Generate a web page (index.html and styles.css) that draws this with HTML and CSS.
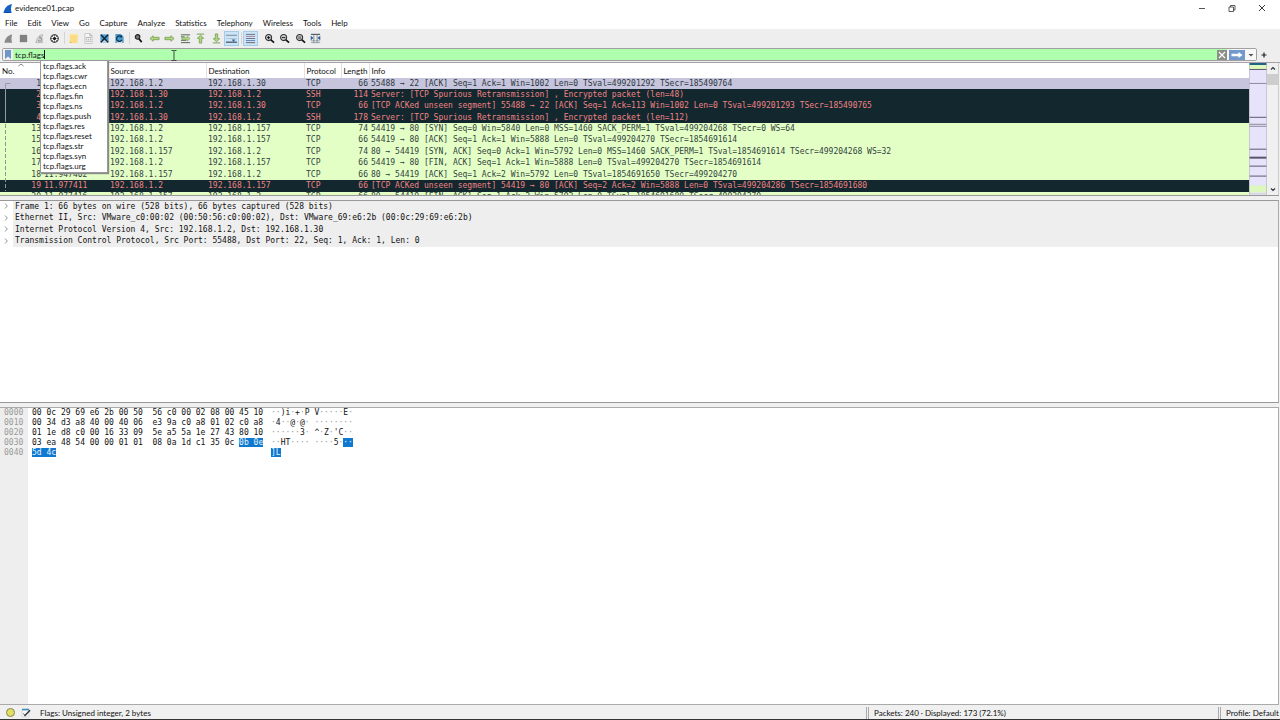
FILE: index.html
```
<!DOCTYPE html>
<html lang="en">
<head>
<meta charset="utf-8">
<title>evidence01.pcap</title>
<link rel="stylesheet" href="styles.css">
</head>
<body>
<header class="titlebar">
  <svg class="logo" viewBox="0 0 11 11"><path d="M0.5 10.5C1.5 5.5 4 1.5 10 0.5C8.600 3.500 8.500 7 9.500 10.500Z" fill="#1560c4"/><path d="M0.500 10.500Q5 8.500 9.500 10.500Z" fill="#0b3f94"/></svg>
  <h1>evidence01.pcap</h1>
  <div class="window-controls">
    <button aria-label="Minimize"><svg viewBox="0 0 10 10"><path d="M2 5.500H8" stroke="#555"/></svg></button>
    <button aria-label="Restore"><svg viewBox="0 0 10 10"><path d="M2 4h4.500v4.500H2zM3.500 4V2.500H8V7H6.500" fill="none" stroke="#333" stroke-width=".8"/></svg></button>
    <button aria-label="Close"><svg viewBox="0 0 10 10"><path d="M2 2l6 6M8 2L2 8" stroke="#222" stroke-width=".9"/></svg></button>
  </div>
</header>
<nav class="menubar">
  <button>File</button><button>Edit</button><button>View</button><button>Go</button><button>Capture</button><button>Analyze</button><button>Statistics</button><button>Telephony</button><button>Wireless</button><button>Tools</button><button>Help</button>
</nav>
<div class="toolbar">
  <div class="tools tools-four">
    <button aria-label="Start capture"><svg viewBox="0 0 12 12"><path d="M1.500 10.500C2.500 6 5 2 10 1.500C9 4.500 9 7.500 10 10.500Z" fill="#8a8a8a"/></svg></button>
    <button aria-label="Stop capture"><svg viewBox="0 0 12 12"><path d="M2 2h8v8H2z" fill="#808080"/></svg></button>
    <button aria-label="Restart capture"><svg viewBox="0 0 12 12"><path d="M2 10.500C3 6 5 2 9.500 1.500C8.500 4.500 8.500 7.500 9.500 10.500Z" fill="#d2d2d2" stroke="#aaa" stroke-width=".7"/><path d="M4.500 7.500a2 2 0 1 0 2-2.500M6.500 3.500v3" fill="none" stroke="#8c8c8c"/></svg></button>
    <button aria-label="Capture options"><svg viewBox="0 0 12 12"><circle cx="6" cy="6" r="4.100" fill="#fff" stroke="#222" stroke-width="1.100"/><circle cx="6" cy="6" r="1.700" fill="#111"/><path d="M6 2v2M6 8v2M2 6h2M8 6h2M3.200 3.200l1.300 1.300M7.500 7.500l1.300 1.300M8.800 3.200L7.500 4.500M4.500 7.500L3.200 8.800" stroke="#333" stroke-width=".7"/></svg></button>
  </div>
  <span class="divider"></span>
  <div class="tools tools-four">
    <button aria-label="Open file"><svg viewBox="0 0 12 12"><path d="M2 1h8.500v10H2z" fill="#fbdc83"/><path d="M2 9v2h2z" fill="#e1ad3c"/><path d="M2 1h8.500v1H2z" fill="#ffe9a8"/></svg></button>
    <button aria-label="Save file"><svg viewBox="0 0 12 12"><path d="M2 .5h5.500L10 3v8.500H2z" fill="#f5f5f5" stroke="#bcbcbc" stroke-width=".8"/><path d="M7.500.5V3H10M3 5h6M3 7h1.500M5.500 7h1M7.500 7H9M3 9h6" fill="none" stroke="#aaa"/></svg></button>
    <button aria-label="Close file"><svg viewBox="0 0 12 12"><path d="M1.500 1.500h9v9h-9z" fill="#4a9bd2"/><path d="M2 8h8v2.500H2z" fill="#c4d6df"/><path d="M2 2l8 8M10 2l-8 8" stroke="#12232d" stroke-width="1.500"/></svg></button>
    <button aria-label="Reload file"><svg viewBox="0 0 12 12"><path d="M1.500 1h6L10.500 4v7h-9z" fill="#4a9bd2"/><path d="M3 9h6v2H3z" fill="#c4d6df"/><path d="M8.500 7.500A3 3 0 1 1 8 4" fill="none" stroke="#12354b" stroke-width="1.400"/><path d="M8.800 1.800v3.200H5.600z" fill="#12354b"/></svg></button>
  </div>
  <span class="divider"></span>
  <div class="tools tools-seven">
    <button aria-label="Find packet"><svg viewBox="0 0 12 12"><circle cx="5" cy="4.300" r="2.500" fill="#777" stroke="#222" stroke-width="1.200"/><path d="M6.500 6.300L9.500 10" stroke="#111" stroke-width="1.900"/></svg></button>
    <button aria-label="Previous packet"><svg viewBox="0 0 12 12"><path d="M1 6L4.500 3v1.700H11v2.600H4.500V9z" fill="#b1d77a" stroke="#6c964e" stroke-width=".8"/></svg></button>
    <button aria-label="Next packet"><svg viewBox="0 0 12 12"><path d="M11 6L7.500 3v1.700H1v2.600h6.500V9z" fill="#b1d77a" stroke="#6c964e" stroke-width=".8"/></svg></button>
    <button aria-label="Go to packet"><svg viewBox="0 0 12 12"><path d="M1 2h10M1 4.200h4M1 8h6M1 10.500h10" stroke="#4c5948"/><path d="M11 6L8 3.300V5H2v2h6v1.800z" fill="#b7df7e" stroke="#6c964e" stroke-width=".6"/></svg></button>
    <button aria-label="First packet"><svg viewBox="0 0 12 12"><path d="M2 1.200h8" stroke="#6c964e"/><path d="M6 2.500l3.500 3.300H7.300V11H4.700V5.800H2.500z" fill="#b1d77a" stroke="#6c964e" stroke-width=".8"/></svg></button>
    <button aria-label="Last packet"><svg viewBox="0 0 12 12"><path d="M2 10.800h8" stroke="#6c964e"/><path d="M6 9.500L9.500 6.200H7.300V1H4.700v5.200H2.500z" fill="#b1d77a" stroke="#6c964e" stroke-width=".8"/></svg></button>
    <button class="active" aria-label="Auto scroll"><svg viewBox="0 0 12 12"><path d="M0 2.500h12" stroke="#76858e"/><path d="M0 6h12" stroke="#a9bbc7" stroke-width=".7"/><path d="M0 10h12" stroke="#33404a" stroke-width="1.200"/><path d="M6 7h4.500L8.300 9.500z" fill="#2f65a8"/></svg></button>
  </div>
  <span class="divider"></span>
  <button class="active" aria-label="Colorize packets"><svg viewBox="0 0 12 12"><path d="M1 1.500h10M1 6h10" stroke="#607080"/><path d="M1 3.700h10" stroke="#a25e75" stroke-width=".8"/><path d="M1 8.200h10" stroke="#5770b5" stroke-width=".9"/><path d="M1 10.500h10" stroke="#60605f"/></svg></button>
  <span class="gap"></span>
  <div class="tools tools-four">
    <button aria-label="Zoom in"><svg viewBox="0 0 12 12"><circle cx="5" cy="5" r="3.300" fill="#c9ccd0" stroke="#333" stroke-width="1.200"/><path d="M3.300 5h3.400M5 3.300v3.400" stroke="#111"/><path d="M7.500 7.500l3.500 3" stroke="#111" stroke-width="1.800"/></svg></button>
    <button aria-label="Zoom out"><svg viewBox="0 0 12 12"><circle cx="5" cy="5" r="3.300" fill="#c9ccd0" stroke="#333" stroke-width="1.200"/><path d="M3.300 5h3.400" stroke="#111"/><path d="M7.500 7.500l3.500 3" stroke="#111" stroke-width="1.800"/></svg></button>
    <button aria-label="Normal size"><svg viewBox="0 0 12 12"><circle cx="5" cy="5" r="3.300" fill="#c9ccd0" stroke="#333" stroke-width="1.200"/><path d="M3.500 4.300h3M3.500 5.700h3" stroke="#333" stroke-width=".8"/><path d="M7.500 7.500l3.500 3" stroke="#111" stroke-width="1.800"/></svg></button>
    <button aria-label="Resize columns"><svg viewBox="0 0 12 12"><path d="M1 1.500h10" stroke="#46535e" stroke-width="1.200"/><path d="M1 8.500h10M1 10.500h10" stroke="#98a5ae"/><path d="M4.200 1v10M7.800 1v10" stroke="#66737e" stroke-width=".8"/><path d="M.8 3v5l3-2.500zM11.200 3v5l-3-2.500z" fill="#2d5c9b"/></svg></button>
  </div>
</div>
<div class="filterbar">
  <div class="filter-field">
    <button class="bookmark" aria-label="Filter bookmarks"><svg viewBox="0 0 8 11"><path d="M1 1h6v9L4 7.500L1 10z" fill="#6f95ca"/></svg></button>
    <input type="text" value="tcp.flags" aria-label="Display filter" spellcheck="false">
    <span class="caret"></span>
    <button class="clear" aria-label="Clear filter"><svg viewBox="0 0 10 10"><path d="M0 0h10v10H0z" fill="#8b8e86"/><path d="M2 2l6 6M8 2L2 8" stroke="#fff" stroke-width="1.200"/></svg></button>
    <button class="apply" aria-label="Apply filter"><svg viewBox="0 0 16 10"><path d="M0 0h16v10H0z" fill="#7399cc"/><path d="M2.500 3.800h7V2l4 3-4 3V6.200h-7z" fill="#fff"/></svg></button>
    <button class="history" aria-label="Filter history"><svg viewBox="0 0 8 8"><path d="M1.500 3h5L4 5.500z" fill="#555"/></svg></button>
    <ul class="completions">
      <li>tcp.flags.ack</li><li>tcp.flags.cwr</li><li>tcp.flags.ecn</li><li>tcp.flags.fin</li><li>tcp.flags.ns</li><li>tcp.flags.push</li><li>tcp.flags.res</li><li>tcp.flags.reset</li><li>tcp.flags.str</li><li>tcp.flags.syn</li><li>tcp.flags.urg</li>
    </ul>
    <svg class="pointer" viewBox="0 0 6 11"><path d="M.5.5H2.500L3 1l.5-.5h2M3 1v9M.5 10.500H2.500L3 10l.5.5h2" fill="none" stroke="#222" stroke-width=".8"/></svg>
  </div>
  <button class="add" aria-label="Add filter button"><svg viewBox="0 0 8 8"><path d="M1.500 4h5M4 1.500v5" stroke="#222" stroke-width="1.200"/></svg></button>
</div>
<main class="panes">
  <section class="packets">
    <div class="packet-scroll">
      <svg class="sort" viewBox="0 0 6 4"><path d="M.5 3L3 1l2.500 2" fill="none" stroke="#666" stroke-width=".8"/></svg>
      <svg class="related" viewBox="0 0 6 113"><path d="M5.500 5.500H.5V40" fill="none" stroke="#9a9aa5"/><path d="M.5 40V113" stroke="#8a9a8c" stroke-dasharray="4 2"/></svg>
      <table class="packet-table">
        <colgroup><col class="c-no"><col class="c-time"><col class="c-addr"><col class="c-addr"><col class="c-proto"><col class="c-len"><col></colgroup>
        <thead><tr><th>No.</th><th>Time</th><th>Source</th><th>Destination</th><th>Protocol</th><th>Length</th><th>Info</th></tr></thead>
        <tbody>
          <tr class="selected"><td>1</td><td>0.000000</td><td>192.168.1.2</td><td>192.168.1.30</td><td>TCP</td><td>66</td><td>55488 → 22 [ACK] Seq=1 Ack=1 Win=1002 Len=0 TSval=499201292 TSecr=185490764</td></tr>
          <tr class="bad"><td>2</td><td>0.000115</td><td>192.168.1.30</td><td>192.168.1.2</td><td>SSH</td><td>114</td><td>Server: [TCP Spurious Retransmission] , Encrypted packet (len=48)</td></tr>
          <tr class="bad"><td>3</td><td>0.000182</td><td>192.168.1.2</td><td>192.168.1.30</td><td>TCP</td><td>66</td><td>[TCP ACKed unseen segment] 55488 → 22 [ACK] Seq=1 Ack=113 Win=1002 Len=0 TSval=499201293 TSecr=185490765</td></tr>
          <tr class="bad"><td>4</td><td>0.000254</td><td>192.168.1.30</td><td>192.168.1.2</td><td>SSH</td><td>178</td><td>Server: [TCP Spurious Retransmission] , Encrypted packet (len=112)</td></tr>
          <tr><td>13</td><td>11.946800</td><td>192.168.1.2</td><td>192.168.1.157</td><td>TCP</td><td>74</td><td>54419 → 80 [SYN] Seq=0 Win=5840 Len=0 MSS=1460 SACK_PERM=1 TSval=499204268 TSecr=0 WS=64</td></tr>
          <tr><td>15</td><td>11.947000</td><td>192.168.1.2</td><td>192.168.1.157</td><td>TCP</td><td>66</td><td>54419 → 80 [ACK] Seq=1 Ack=1 Win=5888 Len=0 TSval=499204270 TSecr=1854691614</td></tr>
          <tr><td>16</td><td>11.947100</td><td>192.168.1.157</td><td>192.168.1.2</td><td>TCP</td><td>74</td><td>80 → 54419 [SYN, ACK] Seq=0 Ack=1 Win=5792 Len=0 MSS=1460 SACK_PERM=1 TSval=1854691614 TSecr=499204268 WS=32</td></tr>
          <tr><td>17</td><td>11.947200</td><td>192.168.1.2</td><td>192.168.1.157</td><td>TCP</td><td>66</td><td>54419 → 80 [FIN, ACK] Seq=1 Ack=1 Win=5888 Len=0 TSval=499204270 TSecr=1854691614</td></tr>
          <tr><td>18</td><td>11.947402</td><td>192.168.1.157</td><td>192.168.1.2</td><td>TCP</td><td>66</td><td>80 → 54419 [ACK] Seq=1 Ack=2 Win=5792 Len=0 TSval=1854691650 TSecr=499204270</td></tr>
          <tr class="bad"><td>19</td><td>11.977411</td><td>192.168.1.2</td><td>192.168.1.157</td><td>TCP</td><td>66</td><td>[TCP ACKed unseen segment] 54419 → 80 [ACK] Seq=2 Ack=2 Win=5888 Len=0 TSval=499204286 TSecr=1854691680</td></tr>
          <tr><td>20</td><td>11.977416</td><td>192.168.1.157</td><td>192.168.1.2</td><td>TCP</td><td>66</td><td>80 → 54419 [FIN, ACK] Seq=1 Ack=2 Win=5792 Len=0 TSval=1854691680 TSecr=499204270</td></tr>
        </tbody>
      </table>
    </div>
    <svg class="minimap" viewBox="0 0 18 132" preserveAspectRatio="none"><path d="M0 0h18v132H0z" fill="#e6e3fb"/><path d="M0 0h18v2H0z" fill="#1d6385"/><path d="M0 2h18v4H0zM0 123h18v7H0z" fill="#dcf8bc"/><path d="M0 6.500h18M0 54.500h18M0 86.500h18M0 103.500h18M0 113.500h18" stroke="#5a5a70"/><path d="M0 20.500h18M0 61.500h18M0 63.500h18" stroke="#8f8b9c"/><path d="M0 95h18" stroke="#55556a" stroke-width="2"/><path d="M.5 0v132M17.500 0v132M0 131.500h18" stroke="#b9b9c2" stroke-width=".7"/></svg>
    <div class="scrollbar">
      <svg viewBox="0 0 10 10"><path d="M3 6.500l2-2 2 2" fill="none" stroke="#333" stroke-width="1.200"/></svg>
      <span class="thumb"></span>
      <svg viewBox="0 0 10 10"><path d="M3 3.500l2 2 2-2" fill="none" stroke="#333" stroke-width="1.200"/></svg>
    </div>
  </section>
  <section class="details">
    <ul class="tree">
      <li><svg viewBox="0 0 6 8"><path d="M2 1.500L4.300 4L2 6.500" fill="none" stroke="#777" stroke-width=".8"/></svg><span>Frame 1: 66 bytes on wire (528 bits), 66 bytes captured (528 bits)</span></li>
      <li><svg viewBox="0 0 6 8"><path d="M2 1.500L4.300 4L2 6.500" fill="none" stroke="#777" stroke-width=".8"/></svg><span>Ethernet II, Src: VMware_c0:00:02 (00:50:56:c0:00:02), Dst: VMware_69:e6:2b (00:0c:29:69:e6:2b)</span></li>
      <li><svg viewBox="0 0 6 8"><path d="M2 1.500L4.300 4L2 6.500" fill="none" stroke="#777" stroke-width=".8"/></svg><span>Internet Protocol Version 4, Src: 192.168.1.2, Dst: 192.168.1.30</span></li>
      <li><svg viewBox="0 0 6 8"><path d="M2 1.500L4.300 4L2 6.500" fill="none" stroke="#777" stroke-width=".8"/></svg><span>Transmission Control Protocol, Src Port: 55488, Dst Port: 22, Seq: 1, Ack: 1, Len: 0</span></li>
    </ul>
  </section>
  <section class="bytes">
    <pre class="offsets">0000
0010
0020
0030
0040</pre>
    <pre class="hex">00 0c 29 69 e6 2b 00 50  56 c0 00 02 08 00 45 10
00 34 d3 a8 40 00 40 06  e3 9a c0 a8 01 02 c0 a8
01 1e d8 c0 00 16 33 09  5e a5 5a 1e 27 43 80 10
03 ea 48 54 00 00 01 01  08 0a 1d c1 35 0c <mark>0b 0e</mark>
<mark>5d 4c</mark></pre>
    <pre class="ascii"><i>··</i>)i<i>·</i>+<i>·</i>P V<i>·····</i>E<i>·</i>
<i>·</i>4<i>··</i>@<i>·</i>@<i>·</i> <i>········</i>
<i>······</i>3<i>·</i> ^<i>·</i>Z<i>·</i>'C<i>··</i>
<i>··</i>HT<i>····</i> <i>····</i>5<i>·</i><mark>··</mark>
<mark>]L</mark></pre>
  </section>
</main>
<footer class="statusbar">
  <button class="expert" aria-label="Expert information"></button>
  <button class="comment" aria-label="Capture comment"><svg viewBox="0 0 10 10"><path d="M1 2h7v7H1z" fill="#f7f7f7" stroke="#c2cbd0" stroke-width=".6"/><path d="M1 1.500h7" stroke="#3888bb" stroke-width="1.500"/><path d="M3.500 8L9 2.200" stroke="#303b40" stroke-width="1.500"/><path d="M2.500 5.500L4 8" stroke="#555"/></svg></button>
  <span class="field">Flags: Unsigned integer, 2 bytes</span>
  <span class="counts">Packets: 240 · Displayed: 173 (72.1%)</span>
  <span class="profile">Profile: Default</span>
</footer>
</body>
</html>
```
FILE: styles.css
```
* { box-sizing: border-box; }
body {
  margin: 0;
  height: 100vh;
  display: flex;
  flex-direction: column;
  overflow: hidden;
  background: #f0f0f0;
  color: #111;
  font: 8px/10px Lato, "Open Sans", sans-serif;
}
button { border: 0; padding: 0; background: none; font: inherit; color: inherit; }
svg { display: block; }
ul { list-style: none; margin: 0; padding: 0; }

.titlebar { display: flex; align-items: center; height: 16px; flex: none; padding: 0 3px; gap: 2px; background: #fff; }
.titlebar h1 { margin: 0; font-size: 8px; font-weight: 400; flex: 1; }
.logo { width: 10px; height: 11px; }
.window-controls { display: flex; align-items: center; }
.window-controls button { width: 30px; height: 14px; display: grid; place-items: center; }
.window-controls svg { width: 10px; height: 10px; }

.menubar { display: flex; flex: none; height: 13px; align-items: center; padding-left: 5px; gap: 10px; background: #fff; }

.toolbar { display: flex; flex: none; height: 18px; align-items: center; padding-left: 1px; background: #eee; }
.tools { display: flex; justify-content: space-between; }
.tools-four { width: 61px; }
.tools-seven { width: 108px; }
.toolbar button { width: 15px; height: 15px; display: grid; place-items: center; }
.toolbar button svg { width: 11px; height: 11px; }
.toolbar .active { background: #cce4f7; outline: 1px solid #a6cbe8; outline-offset: -1px; }
.divider { width: 1px; height: 12px; margin: 0 1px 0 2px; background: #d4d4d4; }
.gap { width: 4px; }

.filterbar { display: flex; flex: none; height: 16px; align-items: center; padding: 0 12px 0 2px; gap: 3px; border-bottom: 1px solid #a8a0a8; background: #eee; }
.filter-field { position: relative; display: flex; flex: 1; height: 13px; align-items: center; border: 1px solid #a0a0a0; border-radius: 2px; background: #afffaf; }
.filter-field input { flex: 1; min-width: 0; height: 11px; padding: 0 2px; border: 0; outline: 0; background: transparent; font: inherit; color: inherit; }
.bookmark { width: 10px; height: 11px; display: grid; place-items: center; background: #f0f0f0; }
.bookmark svg { width: 8px; height: 11px; }
.caret { position: absolute; left: 41px; top: 1px; width: 1px; height: 9px; background: #111; }
.clear svg { width: 10px; height: 10px; }
.apply { padding: 0 1px 0 2px; height: 11px; background: #f7f7f7; }
.apply svg { width: 16px; height: 10px; }
.history { width: 10px; height: 11px; display: grid; place-items: center; background: #f7f7f7; }
.history svg, .add svg { width: 8px; height: 8px; }
.completions { position: absolute; z-index: 2; left: 37px; top: 11px; width: 68px; padding: 0 2px 1px; border: 1px solid #999; background: #fff; box-shadow: 1px 1px 1px #888; }
.pointer { position: absolute; left: 168px; top: 1px; width: 6px; height: 11px; }

.panes { flex: 1; min-height: 0; display: flex; flex-direction: column; gap: 4px; margin-right: 1px; }
.packets { display: flex; flex: 133 1 0; min-height: 0; border-bottom: 1px solid #999; background: #fff; }
.packet-scroll { position: relative; flex: 1; min-width: 0; overflow: hidden; }
.packet-table { width: 100%; height: 140px; table-layout: fixed; border-collapse: collapse; font: 8px/10px "DejaVu Sans Mono", "Liberation Mono", monospace; }
.packet-table th, .packet-table td { padding: 0 0 0 2px; white-space: nowrap; overflow: hidden; text-align: left; }
.packet-table th { height: 15px; font: 8px/10px Lato, "Open Sans", sans-serif; border-right: 1px solid #e2e2e2; }
.packet-table th:last-child { border-right: 0; }
.packet-table td:first-child, .packet-table td:nth-child(6) { text-align: right; padding: 0 1px 0 0; }
.packet-table tbody tr { background: #e3ffc6; color: #34423e; }
.packet-table .selected { background: #c7c5dd; color: #2c3940; }
.packet-table .bad { background: #12272e; color: #f08384; }
.c-no { width: 42px; }
.c-time { width: 66px; }
.c-addr { width: 98px; }
.c-proto { width: 37px; }
.c-len { width: 28px; }
.sort { position: absolute; left: 18px; top: 0; width: 6px; height: 4px; }
.related { position: absolute; left: 5px; top: 15px; width: 6px; height: 113px; }
.minimap { width: 18px; height: 100%; flex: none; }
.scrollbar { flex: none; width: 12px; display: flex; flex-direction: column; align-items: center; background: #f0f0f0; border-right: 1px solid #ccc; }
.scrollbar svg { width: 10px; height: 10px; }
.scrollbar .thumb { width: 11px; height: 11px; margin: 1px 0 auto; background: #cdcdcd; }

.details { flex: 204 1 0; min-height: 0; border-top: 1px solid #999; border-bottom: 1px solid #999; border-right: 1px solid #aaa; background: #fff; }
.tree { display: grid; grid-auto-rows: 1fr; height: 46px; font: 8px/11px "DejaVu Sans Mono", "Liberation Mono", monospace; }
.tree li { display: flex; align-items: center; padding-left: 3px; gap: 4px; }
.tree svg { width: 6px; height: 8px; }
.tree span { flex: 1; padding-left: 2px; background: #eee; align-self: stretch; }

.bytes { display: flex; flex: 299 1 0; min-height: 0; border: 1px solid #aaa; border-width: 1px 1px 1px 0; background: #fff; font: 8px/10px "DejaVu Sans Mono", "Liberation Mono", monospace; }
.bytes pre { margin: 0; font: inherit; }
.offsets { width: 28px; padding-left: 4px; background: #eee; color: #9a9a9a; }
.hex { width: 243px; padding-left: 4px; }
.bytes mark { background: #0f79d0; color: #e8f4ff; }
.ascii i { font-style: normal; color: #999; }

.statusbar { display: flex; flex: none; height: 15px; align-items: center; padding: 1px 0 0 6px; border-bottom: 1px solid #333; background: #f0f0f0; white-space: nowrap; }
.expert { width: 9px; height: 9px; border: 1px solid #858552; border-radius: 50%; background: #e2df64; }
.comment { margin: 0 9px 0 6px; }
.comment svg { width: 10px; height: 10px; }
.field { flex: 1; }
.counts, .profile { height: 12px; line-height: 12px; padding-left: 5px; border-left: 3px double #aaa; }
.counts { width: 352px; }
.profile { width: 62px; padding-right: 1px; }
```
